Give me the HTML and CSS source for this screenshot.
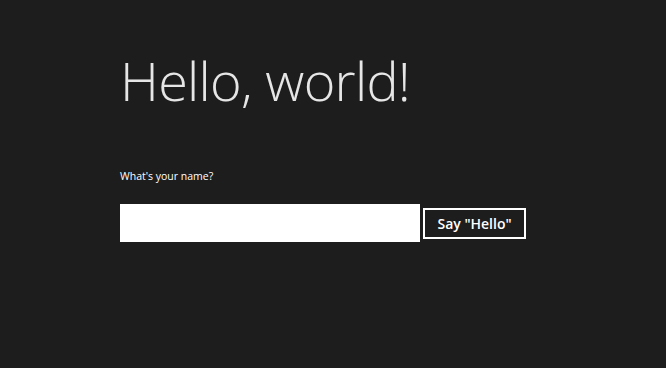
FILE: index.html
```html
<!DOCTYPE html>
<html>
<head>
<meta charset="utf-8">
<link rel="stylesheet" href="styles.css">
</head>
<body>
<main class="page">
  <h1 class="title">Hello, world!</h1>
  <p class="label">What's your name?</p>
  <div class="form-row">
    <input class="name-input" type="text">
    <button class="say-btn">Say "Hello"</button>
  </div>
</main>
</body>
</html>
```
FILE: styles.css
```css
html, body {
  margin: 0;
  padding: 0;
  background: #1d1d1d;
  height: 100%;
}
.page {
  padding: 40px 0 0 120px;
  font-family: "Open Sans", "Noto Sans", sans-serif;
  color: #e6e6e6;
}
.title {
  margin: 0;
  font-weight: 300;
  font-size: 54px;
  line-height: 80px;
  letter-spacing: -0.7px;
}
.label {
  margin: 48px 0 0 0;
  font-size: 10.5px;
  line-height: 16px;
  color: #fff;
}
.form-row {
  display: flex;
  align-items: center;
  gap: 3px;
  margin-top: 20px;
}
.name-input {
  width: 300px;
  height: 38px;
  box-sizing: border-box;
  border: none;
  background: #fff;
  margin: 0;
  padding: 0 8px;
}
.say-btn {
  width: 103px;
  height: 31px;
  box-sizing: border-box;
  border: 2px solid #fff;
  background: #1d1d1d;
  color: #fff;
  font-family: "Open Sans", "Noto Sans", sans-serif;
  font-weight: 600;
  font-size: 14px;
  padding: 0;
  margin: 0;
}
```
